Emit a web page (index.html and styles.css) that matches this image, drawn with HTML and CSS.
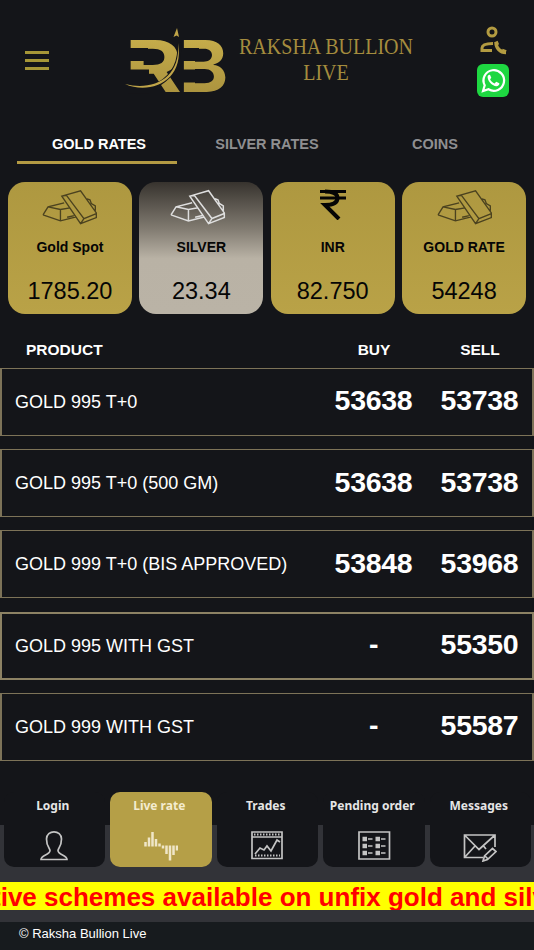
FILE: index.html
```html
<!DOCTYPE html>
<html lang="en">
<head>
  <meta charset="UTF-8">
  <meta name="viewport" content="width=device-width, initial-scale=1.0">
  <title>Raksha Bullion Live</title>
  <link rel="stylesheet" href="styles.css">
</head>
<body>

  <!-- shared icon -->
  <svg class="defs" width="0" height="0">
    <symbol id="bars" viewBox="125 38 170 110">
      <path d="M131 118L146 94L194 82M146 94L183 102L212 97M183 102V136M131 118L183 136L230 124M203 125L224 120M187 62L243 46L290 112V126L243 144L187 62ZM187 62L201 60L253 129L290 114M253 129L243 144M262 70L271 73L275 84L287 91V106"/>
    </symbol>
  </svg>

  <header class="header">
    <button class="menu-btn"><span></span><span></span><span></span></button>
    <svg class="logo" width="104" height="70" viewBox="0 0 104 70">
      <defs>
        <linearGradient id="gold" x1="0" y1="0" x2="0" y2="1">
          <stop offset="0" stop-color="#cdb44e"/>
          <stop offset="1" stop-color="#a48c3b"/>
        </linearGradient>
      </defs>
      <g class="logo-text" fill="url(#gold)">
        <text transform="translate(0 65.500) scale(1.21 1)">R</text>
        <text transform="translate(54 65.500) scale(1.04 1)">B</text>
      </g>
      <g class="logo-cut">
        <rect x="3" y="22" width="20" height="13"/>
        <rect x="3" y="43.500" width="21" height="24"/>
        <rect x="56" y="22" width="18" height="13"/>
        <rect x="56" y="43.500" width="18" height="13"/>
      </g>
      <path class="swoosh-edge" d="M34 58C47 50 56 38 54 17"/>
      <path class="swoosh" d="M0 58C26 65 56 54 53 17C60 56 24 69 0 58Z"/>
      <path class="swoosh" d="M52 2L54 11L51.500 9.500L48.500 11Z"/>
    </svg>
    <h1>RAKSHA BULLION<br>LIVE</h1>
    <div class="contact">
      <svg class="support" width="30" height="30" viewBox="0 0 30 30">
        <circle class="gold-line" cx="13" cy="6" r="4"/>
        <path class="gold-line" d="M14 17.500C8 17.500 3 19 3 22V24.500H13"/>
        <path class="gold-line thick" d="M17 16C17 22 21 26.500 27 26.500M17 15.500L18.500 19M23 24.500L27 26"/>
      </svg>
      <svg width="32" height="33" viewBox="0 0 32 33">
        <rect width="32" height="33" rx="6" fill="#1ed741"/>
        <path class="wa-ring" d="M6 27L7.700 21.300A10.300 10.300 0 1 1 11.500 25.300Z"/>
        <path fill="#fff" d="M12.200 10.700C11 11 10.300 12.300 10.700 14C11.500 18 15.300 21.800 19.300 22.200C21 22.300 22.500 21 22.400 19.300L19.200 17.700L17.600 19.500C15.500 18.700 14 17.300 13.100 15.300L14.300 13.700L13.100 10.900Z"/>
      </svg>
    </div>
  </header>

  <nav class="tabs">
    <a class="tab active">GOLD RATES</a>
    <a class="tab">SILVER RATES</a>
    <a class="tab">COINS</a>
  </nav>

  <section class="cards">
    <div class="card">
      <svg class="bars"><use href="#bars"/></svg>
      <h2>Gold Spot</h2>
      <p>1785.20</p>
    </div>
    <div class="card silver">
      <svg class="bars"><use href="#bars"/></svg>
      <h2>SILVER</h2>
      <p>23.34</p>
    </div>
    <div class="card">
      <svg class="rupee" viewBox="0 0 28 31">
        <path d="M1 2.500H27M1 9H27"/>
        <path class="leg" d="M6 2.500C15 2.500 18.500 4.500 18.500 9C18.500 13.500 14 16 6 16L20 30"/>
      </svg>
      <h2>INR</h2>
      <p>82.750</p>
    </div>
    <div class="card">
      <svg class="bars"><use href="#bars"/></svg>
      <h2>GOLD RATE</h2>
      <p>54248</p>
    </div>
  </section>

  <section class="rates">
    <div class="rates-head"><span>PRODUCT</span><span>BUY</span><span>SELL</span></div>
    <div class="rate"><span>GOLD 995 T+0</span><b>53638</b><b>53738</b></div>
    <div class="rate"><span>GOLD 995 T+0 (500 GM)</span><b>53638</b><b>53738</b></div>
    <div class="rate"><span>GOLD 999 T+0 (BIS APPROVED)</span><b>53848</b><b>53968</b></div>
    <div class="rate double"><span>GOLD 995 WITH GST</span><b>-</b><b>55350</b></div>
    <div class="rate"><span>GOLD 999 WITH GST</span><b>-</b><b>55587</b></div>
  </section>

  <footer class="bottom">
    <nav class="menu">
      <a class="item">
        <span>Login</span>
        <svg viewBox="0 0 34 34"><path d="M4 31.500C4 27 13 27 13 22.500C13 20 9.500 19 9.500 11C9.500 1.500 24.500 1.500 24.500 11C24.500 19 21 20 21 22.500C21 27 30 27 30 31.500Z"/></svg>
      </a>
      <a class="item active">
        <span>Live rate</span>
        <svg viewBox="0 0 34 34"><path class="wave" d="M1.500 14V18.500M5 9.500V18.500M8.500 4V18.500M12 11V18.500M15.500 15.500V18.500M19 17.500V20.500M22.500 17.500V26M26 17.500V32.500M29.500 17.500V27M33 17.500V22.500"/></svg>
      </a>
      <a class="item">
        <span>Trades</span>
        <svg viewBox="0 0 34 34"><path d="M2 4H32V30.500H2ZM2 9H32M5 26L10 20L14 22L17 18L21 23L27 12L30 14"/><path class="dots" d="M4 6.500H30M5 27.500H30"/></svg>
      </a>
      <a class="item">
        <span>Pending order</span>
        <svg viewBox="0 0 34 34"><path d="M2 4H32.500V31H2Z"/><path class="blocks" d="M5.500 11H10M5.500 18H10M5.500 25H10M18.500 11H23M18.500 18H23M18.500 25H23"/><path d="M11 11H15.500M11 18H15.500M11 25H15.500M24 11H28.500M24 18H28.500M24 25H28.500"/></svg>
      </a>
      <a class="item">
        <span>Messages</span>
        <svg viewBox="0 0 34 34"><path d="M20 29.500H1.500V7H32V19M1.500 7L16 21.500L32 7M1.500 29.500L12 18M20.500 18L23 21M20 33L21.500 28L29.500 20.500L33 23.500L24.500 31.500ZM22 28L25 31"/></svg>
      </a>
    </nav>
    <div class="marquee"><span>tive schemes available on unfix gold and silver</span></div>
    <div class="copyright">© Raksha Bullion Live</div>
  </footer>

</body>
</html>
```

FILE: styles.css
```css
* {
  box-sizing: border-box;
  margin: 0;
  padding: 0;
}

body {
  font-family: "Liberation Sans", Arial, sans-serif;
  background-color: #141519;
  color: #fff;
  height: 950px;
  overflow: hidden;
}

svg {
  display: block;
  fill: none;
}

.defs {
  display: none;
}

/* Header */
.header {
  display: flex;
  align-items: flex-start;
  height: 120px;
  padding: 26px 25px 0 25px;
}

.menu-btn {
  display: flex;
  flex-direction: column;
  gap: 5px;
  width: 24px;
  margin: 25px 76px 0 0;
  background: none;
  border: none;
}

.menu-btn span {
  height: 3px;
  background-color: #a69637;
}

.logo {
  flex: none;
  overflow: visible;
}

.logo-text {
  font-family: Inter, sans-serif;
  font-size: 71.500px;
  font-weight: 700;
}

.logo-cut {
  fill: #141519;
}

.swoosh {
  fill: #c0a549;
}

.swoosh-edge {
  stroke: #141519;
  stroke-width: 4;
}

h1 {
  flex: none;
  width: 202px;
  margin: 8px 0 0 -4px;
  font-family: "Liberation Serif", serif;
  font-size: 23px;
  font-weight: 400;
  line-height: 26px;
  text-align: center;
  white-space: nowrap;
  color: #a48c3e;
  transform: scaleX(0.87);
}

.contact {
  display: flex;
  flex-direction: column;
  gap: 8px;
  width: 32px;
  margin-left: auto;
}

.support {
  margin-left: 2px;
}

.gold-line {
  stroke: #b39b41;
  stroke-width: 3;
}

.gold-line.thick {
  stroke-width: 3.500;
}

.wa-ring {
  stroke: #fff;
  stroke-width: 2.200;
}

/* Tabs */
.tabs {
  display: grid;
  grid-template-columns: 160px 160px 160px;
  column-gap: 8px;
  height: 62px;
  padding: 3px 17px 0;
}

.tab {
  height: 41px;
  padding-left: 4px;
  border-bottom: 3px solid transparent;
  font-size: 14.500px;
  font-weight: bold;
  line-height: 42px;
  text-align: center;
  color: #8f8f91;
}

.tab.active {
  color: #fff;
  border-color: #b39a43;
}

/* Spot cards */
.cards {
  display: grid;
  grid-template-columns: repeat(4, 1fr);
  gap: 7.500px;
  padding: 0 8px;
}

.card {
  display: flex;
  flex-direction: column;
  align-items: center;
  height: 132px;
  border-radius: 17px;
  background: linear-gradient(#ae9840, #b9a247);
  color: #050505;
}

.card.silver {
  background: linear-gradient(#37332e, #807a70 35%, #b9b2a5 58%, #bab3a6);
}

.bars {
  width: 57px;
  height: 37px;
  margin-top: 6px;
  stroke: #4b421f;
  stroke-width: 4;
}

.silver .bars {
  margin-right: 8px;
  stroke: #dedede;
  stroke-width: 4.500;
}

.rupee {
  width: 28px;
  height: 31px;
  margin: 7px 0 5px;
  stroke: #050505;
  stroke-width: 3;
}

.rupee .leg {
  stroke-width: 4;
}

.card h2 {
  height: 45px;
  font-size: 14px;
  line-height: 45px;
}

.card p {
  margin-top: 8px;
  font-size: 23.500px;
  line-height: 27px;
}

/* Rate table */
.rates {
  display: flex;
  flex-direction: column;
  gap: 13.300px;
}

.rates-head,
.rate {
  display: grid;
  grid-template-columns: 1fr 106px 106px;
  align-items: center;
  text-align: center;
}

.rates-head {
  height: 40.500px;
  padding: 27px 1px 0 26px;
  font-size: 15.500px;
  font-weight: bold;
}

.rate {
  height: 68px;
  padding-left: 13px;
  border: 1px solid #7d7358;
  border-width: 1px 2px;
  font-size: 18px;
}

.rate.double {
  border-width: 2px;
  border-color: #8d8264;
}

.rates-head span:first-child,
.rate span {
  text-align: left;
}

.rate span {
  padding-top: 1px;
}

.rate b {
  padding: 0 0 2px 1px;
  font-size: 28.500px;
  letter-spacing: -0.300px;
}

/* Bottom menu */
.bottom {
  margin-top: 31px;
}

.menu {
  display: grid;
  grid-template-columns: repeat(5, 101.500px);
  gap: 5px;
  height: 90px;
  padding-left: 3.500px;
  background: linear-gradient(#141519 33px, #323338 33px);
}

.item {
  display: flex;
  flex-direction: column;
  align-items: center;
  height: 75px;
  padding-top: 4px;
  border-radius: 10px;
  background-color: #141519;
  font-family: "Noto Sans", sans-serif;
  font-size: 12px;
  font-weight: 700;
  line-height: 19px;
  color: #e5e5e5;
}

.item span {
  padding-right: 3px;
}

.item.active {
  background-color: #b59f47;
  color: #f4ecd0;
}

.item svg {
  width: 34px;
  height: 34px;
  margin-top: 13px;
  stroke: #c4c4c4;
  stroke-width: 1.700;
}

.item .wave {
  stroke: #efe6c8;
  stroke-width: 2.500;
}

.item .dots {
  stroke-width: 2;
  stroke-dasharray: 1.500 1.500;
}

.item .blocks {
  stroke-width: 4.500;
}

.marquee {
  height: 28px;
  overflow: hidden;
  background-color: #ff0;
  color: #f00;
  font-size: 26px;
  font-weight: bold;
  line-height: 30px;
  white-space: nowrap;
}

.marquee span {
  margin-left: -8px;
}

.copyright {
  height: 40px;
  padding-left: 19px;
  border-top: 12px solid #323338;
  background-color: #171b1e;
  font-size: 13px;
  line-height: 24px;
}
```
